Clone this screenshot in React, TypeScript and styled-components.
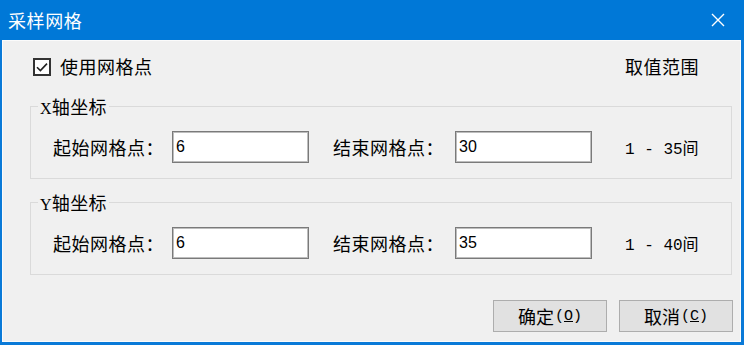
import React from 'react'
import styled, { createGlobalStyle } from 'styled-components'

const GlobalStyle = createGlobalStyle`
  html, body {
    margin: 0;
    padding: 0;
    overflow: hidden;
    background: #f0f0f0;
  }
  body {
    font-family: "Noto Sans CJK SC", sans-serif;
    color: #000;
  }
`

interface Axis {
  name: string
  from: string
  to: string
  max: number
}

const axes: Axis[] = [
  { name: 'X轴坐标', from: '6', to: '30', max: 35 },
  { name: 'Y轴坐标', from: '6', to: '35', max: 40 },
]

const App: React.FC = () => {
  return (
    <>
      <GlobalStyle />
      <Frame>
        <TitleBar>
          <Title>采样网格</Title>
          <CloseButton aria-label="close">
            <svg width="14" height="14" viewBox="0 0 14 14">
              <path d="M1 1 L13 13 M13 1 L1 13" stroke="#fff" strokeWidth="1.4" fill="none" />
            </svg>
          </CloseButton>
        </TitleBar>
        <Body>
          <TopRow>
            <CheckLabel>
              <CheckBox>
                <svg width="18" height="18" viewBox="0 0 18 18">
                  <rect x="1" y="1" width="16" height="16" fill="#fff" stroke="#333" strokeWidth="2" />
                  <path d="M4 9.2 L7.4 12.6 L14 5.6" stroke="#222" strokeWidth="1.6" fill="none" />
                </svg>
              </CheckBox>
              使用网格点
            </CheckLabel>
            <Heading>取值范围</Heading>
          </TopRow>
          {axes.map((a) => (
            <Group key={a.name}>
              <Legend>
                <Latin>{a.name.slice(0, 1)}</Latin>
                {a.name.slice(1)}
              </Legend>
              <Row>
                <Caption $width={119}>起始网格点：</Caption>
                <Field value={a.from} readOnly />
                <Caption $width={122} $lead={24}>结束网格点：</Caption>
                <Field value={a.to} readOnly />
                <Range>1 - {a.max}间</Range>
              </Row>
            </Group>
          ))}
          <Footer>
            <PushButton>
              确定<Key>(<u>O</u>)</Key>
            </PushButton>
            <PushButton>
              取消<Key>(<u>C</u>)</Key>
            </PushButton>
          </Footer>
        </Body>
      </Frame>
    </>
  )
}

const Frame = styled.div`
  width: 744px;
  height: 345px;
  box-sizing: border-box;
  display: flex;
  flex-direction: column;
  background: #0a7ad8;
  padding: 0 3px 3px 2px;
`

const TitleBar = styled.div`
  height: 40px;
  flex: none;
  display: flex;
  align-items: center;
  justify-content: space-between;
  background: #0078d7;
  margin: 0 -3px 0 -2px;
  padding-left: 8px;
`

const Title = styled.span`
  color: #fff;
  font-size: 18px;
  letter-spacing: 0.6px;
`

const CloseButton = styled.div`
  width: 52px;
  height: 40px;
  display: flex;
  align-items: center;
  justify-content: center;
`

const Body = styled.div`
  flex: 1;
  display: flex;
  flex-direction: column;
  background: #f0f0f0;
  border: 1px solid #fbfbfb;
  padding: 15px 7px 9px 0;
`

const TopRow = styled.div`
  display: flex;
  align-items: center;
  height: 20px;
  padding-left: 30px;
  font-size: 18px;
  letter-spacing: 0.5px;
`

const CheckLabel = styled.div`
  display: flex;
  align-items: center;
`

const CheckBox = styled.span`
  display: flex;
  width: 18px;
  height: 18px;
  margin: 2px 9px 0 0;
`

const Heading = styled.span`
  margin-left: auto;
  margin-right: 34px;
`

const Group = styled.fieldset`
  margin: 19px 1px 0 27px;
  padding: 14px 0 15px 0;
  border: 1px solid #dadada;
  min-width: 0;
  & + & {
    margin-top: 12px;
  }
`

const Legend = styled.legend`
  margin-left: 7px;
  padding: 0 2px;
  height: 22px;
  font-size: 18px;
  line-height: 22px;
  letter-spacing: 0.3px;
`

const Latin = styled.span`
  font-family: "Liberation Serif", serif;
  font-size: 16px;
  line-height: 1;
`

const Row = styled.div`
  display: flex;
  align-items: center;
  height: 32px;
  padding-left: 22px;
`

const Caption = styled.span<{ $width: number; $lead?: number }>`
  width: ${(p) => p.$width}px;
  margin-left: ${(p) => p.$lead || 0}px;
  font-size: 18px;
  letter-spacing: 0.5px;
  flex: none;
`

const Field = styled.input`
  width: 137px;
  height: 32px;
  box-sizing: border-box;
  border: 1px solid #7a7a7a;
  box-shadow: inset 0 0 0 1px #bdbdbd;
  background: #fff;
  padding: 0 3px;
  font-family: "Liberation Sans", sans-serif;
  font-size: 16px;
  color: #000;
  outline: none;
  flex: none;
`

const Range = styled.span`
  margin-left: 33px;
  font-family: "Liberation Mono", "Noto Sans CJK SC", monospace;
  font-size: 16px;
`

const Footer = styled.div`
  margin-top: auto;
  display: flex;
  justify-content: flex-end;
  gap: 12px;
`

const PushButton = styled.div`
  width: 114px;
  height: 32px;
  box-sizing: border-box;
  display: flex;
  align-items: center;
  justify-content: center;
  background: #e1e1e1;
  border: 1px solid #adadad;
  font-size: 18px;
`

const Key = styled.span`
  font-family: "Liberation Mono", monospace;
  font-size: 15px;
  margin-left: 1px;
`

export default App
